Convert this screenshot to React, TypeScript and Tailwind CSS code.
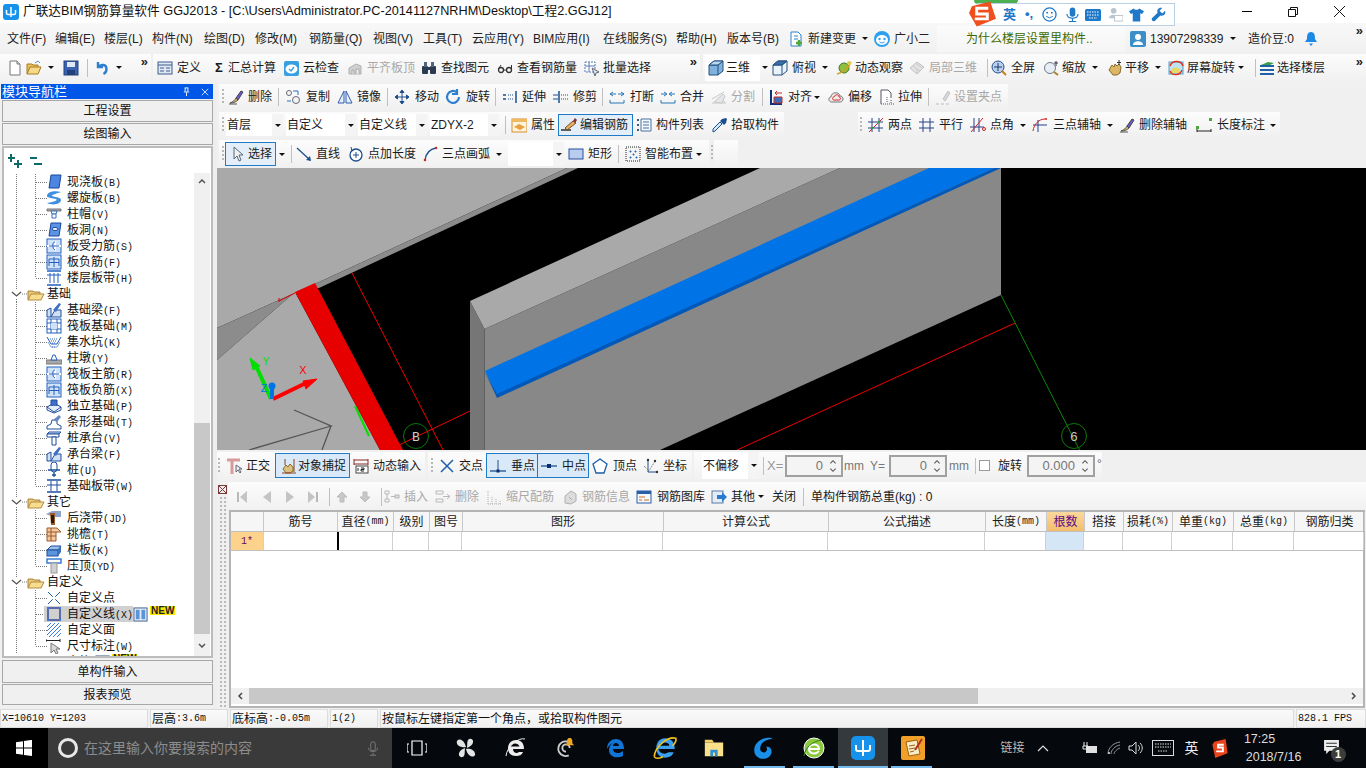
import React, { ReactNode } from 'react';

const mono = "font-['Liberation_Mono','Noto_Sans_CJK_SC',monospace] text-[10px]";

// latin bits in the old tree/status font are half as wide as the CJK ones
const Mixed = ({ t }: { t: string }) => (
    <>
        {t.split(/([\x20-\x7e]+)/).map((s, i) =>
            /[\x20-\x7e]/.test(s) ? <span key={i} className={mono}>{s}</span> : <span key={i}>{s}</span>
        )}
    </>
);

const B = '#2f5fb0';
const icons: Record<string, ReactNode> = {
    newdoc: <><path d="M3 1h7l3 3v11H3z" fill="#fff" stroke="#777" /><path d="M10 1v3h3" fill="#ddd" stroke="#777" /></>,
    open: <><path d="M1 14V4h5l1 1h5v2" fill="#e8c060" stroke="#a87c20" /><path d="M1 14l3-7h11l-3 7z" fill="#f6d98a" stroke="#a87c20" /><path d="M9 3l3-2 2 2" stroke="#5a8fd0" fill="none" /></>,
    save: <><rect x="1" y="1" width="14" height="14" fill="#3a62b0" stroke="#24407a" /><rect x="4" y="2" width="8" height="5" fill="#dfe8f6" /><rect x="4" y="10" width="8" height="5" fill="#24407a" /></>,
    undo: <path d="M4 2v5h5M4.500 7c2-3 8-3 8 2 0 2-1 4-3 5" fill="none" stroke="#2f7fd0" strokeWidth="2.400" />,
    def: <><rect x="1" y="2" width="14" height="12" fill="#dfe7f2" stroke="#3f5f8f" /><path d="M1 5h14M3 8h4M3 11h4M9 8h4M9 11h4" stroke="#3f5f8f" /></>,
    cloud: <><rect x="1" y="1" width="15" height="15" rx="2" fill="#38a0e0" /><ellipse cx="8.500" cy="9" rx="6" ry="4.500" fill="#fff" /><path d="M6 9l2 2 3-4" stroke="#38a0e0" strokeWidth="1.400" fill="none" /></>,
    flush: <><path d="M2 14V8l7-4 5 2v8z" fill="#d0d0d0" stroke="#b0b0b0" /><path d="M5 14v-4h2v4M9 14V9h3v5" fill="#eee" stroke="#aaa" /></>,
    binoc: <><rect x="1" y="6" width="6" height="8" rx="1" fill="#2c3a50" /><rect x="9" y="6" width="6" height="8" rx="1" fill="#2c3a50" /><rect x="3" y="2" width="3" height="5" fill="#50647f" /><rect x="10" y="2" width="3" height="5" fill="#50647f" /><rect x="6" y="7" width="4" height="3" fill="#2c3a50" /></>,
    glasses: <><circle cx="4" cy="10" r="2.500" fill="none" stroke="#333" strokeWidth="1.300" /><circle cx="12" cy="10" r="2.500" fill="none" stroke="#333" strokeWidth="1.300" /><path d="M1.500 9L4 5M14.500 9V5M6.500 10h3" stroke="#333" fill="none" /></>,
    batch: <><rect x="1" y="2" width="10" height="10" fill="#fff" stroke="#5a7ab0" strokeDasharray="2 1" /><path d="M1 6h10M5 2v10" stroke="#5a7ab0" /><path d="M8 8l7 4-3 1-1 3z" fill="#dbe6f5" stroke="#667" /></>,
    cube: <><path d="M1 5l5-4h9v10l-5 4H1z" fill="#7fb2dc" stroke="#24507f" /><path d="M1 5h9v10M10 5l5-4" fill="none" stroke="#24507f" /><path d="M1 5h9l5-4H6z" fill="#b8d6ee" stroke="#24507f" /></>,
    cubeTop: <><path d="M1 5l5-4h9v10l-5 4H1z" fill="#eaf2fa" stroke="#24507f" /><path d="M1 5h9v10M10 5l5-4" fill="none" stroke="#24507f" /><path d="M1 5h9l5-4H6z" fill="#3a6ea5" stroke="#24507f" /></>,
    orbit: <><circle cx="8" cy="8" r="5" fill="#8fbf3f" stroke="#3f7a20" /><path d="M1 14C6 13 13 8 15 2" stroke="#d0a020" strokeWidth="1.500" fill="none" /><circle cx="13" cy="3" r="2" fill="#e0d050" /></>,
    part3d: <><path d="M1 8l7-6 7 5-7 7z" fill="#e4e4e4" stroke="#c0c0c0" /><path d="M4 6l7 5M7 3.500l7 5M8 14V9" stroke="#c8c8c8" /></>,
    full: <><circle cx="7" cy="7" r="6" fill="#b8d0ee" stroke="#28508a" /><path d="M7 3v8M3 7h8" stroke="#1c3c70" /><path d="M11 11l4 4" stroke="#c08020" strokeWidth="2" /></>,
    zoom: <><circle cx="7" cy="8" r="5.500" fill="#e8eef6" stroke="#707a88" /><path d="M11 12l4 3" stroke="#b08030" strokeWidth="2" /><path d="M13 1v5M11 3h4" stroke="#334" /></>,
    hand: <><path d="M2 10l3-5 2 2 1-3 2 2 2-2 2 3-1 6-3 2H6z" fill="#dcb664" stroke="#8a6a2a" /><path d="M12 0v5M10 2.500h4" stroke="#334" /></>,
    screen: <><rect x="1" y="2" width="14" height="12" fill="#bfe3f2" stroke="#4fa0c8" /><path d="M3 10c2-3 6-3 9-1v4H3z" fill="#e8d86a" /><path d="M2 6c2-6 11-6 13 0M14 10c-2 6-10 6-12 1" fill="none" stroke="#e03020" strokeWidth="1.400" /></>,
    layers: <><path d="M2 5l7-3 6 1-6 3z" fill="#3a9c48" /><path d="M1 6h14M1 10h14M1 14h14" stroke="#1f5fa8" strokeWidth="1.800" /></>,
    bluedoc: <><path d="M3 1h7l3 3v11H3z" fill="#fff" stroke="#2a80d0" /><path d="M6 5h4M6 8h4" stroke="#2a80d0" /><path d="M11 9v6M8 12h6" stroke="#4ca83a" strokeWidth="2.400" /></>,
    avatar: <><circle cx="8" cy="8" r="8" fill="#2ea0f0" /><ellipse cx="8" cy="9" rx="6" ry="5" fill="#fff" /><circle cx="5.500" cy="8" r="1.200" fill="#2ea0f0" /><circle cx="10.500" cy="8" r="1.200" fill="#2ea0f0" /><path d="M5.500 11q2.500 2 5 0" stroke="#2ea0f0" fill="none" /></>,
    user: <><rect width="16" height="16" rx="2" fill="#3a8fc8" /><circle cx="8" cy="6" r="3" fill="#fff" /><path d="M3 14c0-5 10-5 10 0z" fill="#fff" /></>,
    bell: <><path d="M8 1c-4 0-4 4-4 7l-2 3h12l-2-3c0-3 0-7-4-7z" fill="#1e88e5" /><path d="M6 12.500h4L8 15z" fill="#1e88e5" /></>,
    erase: <><path d="M2 14c3-1 5-3 6-5l2 2c-2 2-4 3-8 3z" fill="#d8b060" stroke="#555" /><path d="M8 9l5-7 2 1-5 8z" fill="#6a5acd" stroke="#444" /><path d="M1 15h8" stroke="#555" /></>,
    copy: <><circle cx="4" cy="4" r="2.500" fill="none" stroke="#667" /><circle cx="11" cy="11" r="3.500" fill="none" stroke="#667" /><path d="M8 2h5v4M6 12H2" stroke="#2a6cc0" fill="none" /></>,
    mirror: <><path d="M7 2L1 14h6z" fill="#e6eef8" stroke={B} /><path d="M9 2l6 12H9z" fill="#e6eef8" stroke={B} /></>,
    move: <path d="M8 1v14M1 8h14M8 1L6 3.500h4zM8 15l-2-2.500h4zM1 8l2.500-2v4zM15 8l-2.500-2v4z" fill="#1d4f8e" stroke="#1d4f8e" />,
    rotate: <path d="M12 3.500A6 6 0 1 0 14 8M12 0v5H7" fill="none" stroke="#2f7fd0" strokeWidth="2.200" />,
    extend: <><path d="M14 2v12M1 6h3M1 10h3" stroke="#1d4f8e" strokeWidth="1.500" fill="none" /><path d="M6 6h6M6 10h6" stroke="#1d4f8e" strokeDasharray="1 1" /></>,
    trim: <><path d="M6 2v12" stroke="#1d4f8e" strokeWidth="1.500" /><path d="M0 6h5M0 10h5" stroke="#1d4f8e" /><path d="M8 6h7M8 10h7" stroke="#1d4f8e" strokeDasharray="1 1" /></>,
    brk: <path d="M1 11v3h14v-3M1 5h6M9 5h6M4 3L1 5l3 2M12 3l3 2-3 2" fill="none" stroke="#2a76b8" />,
    merge: <path d="M1 11v3h14v-3M1 5h5M10 5h5M4 3l3 2-3 2M12 3L9 5l3 2" fill="none" stroke="#2a76b8" />,
    split: <><path d="M1 14h14M1 10l12-7M10 8l4 6" stroke="#c8c8c8" fill="none" /><path d="M3 13l9-8 2 2-3 7z" fill="#e6e6e6" stroke="#c8c8c8" /></>,
    align: <><path d="M1 1v14h11" fill="none" stroke="#0d2f80" strokeWidth="2" /><path d="M4 8h8v6H4z" fill="#3a6fc0" stroke="#c03020" /><path d="M5 4h7M5 4l2-2M5 4l2 2" stroke="#c03020" fill="none" /></>,
    offset: <><path d="M4 13c-4 0-4-5-1-5 0-5 8-6 9-1 4 0 4 6 0 6z" fill="#f2e8e4" stroke="#707a88" /><path d="M6 11c-2 0-2-3 0-3 1-3 5-3 5 0 2 0 2 3 0 3z" fill="none" stroke="#d03030" /></>,
    stretch: <><path d="M2 15V1h7l3 3v5" fill="#fff" stroke="#556" /><path d="M2 15h13M8 8v6M12 11v3" stroke="#556" strokeDasharray="1 1" fill="none" /></>,
    grip: <><path d="M8 10l5-8 2 2-5 8z" fill="#d8d8d8" stroke="#c0c0c0" /><path d="M1 15h3M6 15h3M11 15h3" stroke="#bbb" /></>,
    props: <><rect x="1" y="2" width="15" height="13" fill="#fdf2dc" stroke="#d89030" /><path d="M1 2h15v3H1z" fill="#f0b860" /><path d="M3 10l5-3 6 3-5 3z" fill="#e8a040" /></>,
    editbar: <><path d="M0 13h10" stroke="#222" strokeWidth="1.400" /><path d="M4 11l8-7 3 2-9 7z" fill="#e8b060" stroke="#7a4a20" /><path d="M12 4l2-3 2 2-2 3z" fill="#8a3030" /></>,
    list: <><path d="M5 2h10v12H5z" fill="#f4f8fc" stroke="#4a70a0" /><path d="M7 5h6M7 8h6M7 11h6" stroke="#4a70a0" /><path d="M1 3h2M1 8h2M1 13h2" stroke="#3a5a80" strokeWidth="2" /></>,
    pick: <><path d="M1 15l2-1 7-7-2-2-7 7z" fill="#d8e8f8" stroke="#1d4f8e" /><path d="M8 4l4 4 2-2 1-4-1-1-4 1z" fill="#1d4f8e" /></>,
    twopt: <><path d="M4 1v14M11 1v14M0 5h15M0 11h15" stroke="#27408a" /><path d="M1 15L15 1" stroke="#d02020" /><circle cx="4" cy="11" r="1.200" fill="#3a9a3a" /><circle cx="11" cy="5" r="1.200" fill="#3a9a3a" /></>,
    para: <path d="M4 1v14M11 1v14M0 5h15M0 11h15" stroke="#27408a" />,
    angle: <><path d="M4 1v14M9 1v14M0 10h14" stroke="#27408a" /><path d="M1 15L13 1" stroke="#d02020" /><circle cx="14" cy="12" r="1.500" fill="none" stroke="#d02020" /></>,
    arcaux: <><path d="M1 8h14M6 3v12" stroke="#27408a" /><path d="M1 14C2 7 7 2 13 2" fill="none" stroke="#d02020" /><circle cx="14" cy="2" r="1" fill="#d02020" /></>,
    dim: <><path d="M1 12v3M15 12v3M1 14h14" stroke="#222" /><rect x="0" y="9" width="3" height="3" fill="#4ca83a" /><rect x="13" y="1" width="3" height="3" fill="#4ca83a" /></>,
    cursor: <path d="M4 1v12l3-3 2 5 2-1-2-5h4z" fill="#f0f0f0" stroke="#5a6878" />,
    line: <><path d="M1 2l13 12" stroke="#1d4f8e" strokeWidth="1.300" /><path d="M15 15l-5-1 4-4z" fill="#1d4f8e" /></>,
    ptadd: <><circle cx="8" cy="9" r="6" fill="#fff" stroke="#1d4f8e" strokeWidth="1.300" /><path d="M8 6v6M5 9h6" stroke="#1d4f8e" /><path d="M3 1l1 4 3-2" fill="none" stroke="#1d4f8e" /></>,
    arc: <><path d="M2 14C3 7 7 3 13 2" fill="none" stroke="#1d4f8e" strokeWidth="1.300" /><circle cx="2" cy="14" r="1.300" fill="#c03020" /><circle cx="13" cy="2" r="1.300" fill="#c03020" /></>,
    rect: <rect x="1" y="3" width="14" height="10" fill="#b8ccf0" stroke="#2a4fa0" />,
    smart: <><rect x="1" y="1" width="14" height="14" fill="#f4f4f4" stroke="#222" strokeDasharray="1 1" /><path d="M5 5h1v1H5zM10 5h1v1h-1zM8 8h1v1H8zM5 11h1v1H5zM11 11h1v1h-1z" stroke="#2a6cc0" /></>,
    ortho: <><path d="M0 2h13M5 2v14" stroke="#d89a9a" strokeWidth="3" /><path d="M9 7v7l2-2 2 3 1-1-2-3h3z" fill="#e8eef4" stroke="#667" /></>,
    snap: <><path d="M2 11l3-4 2 2 2-3 3 3v4l-3 2H5z" fill="#dcc080" stroke="#8a6a2a" /><path d="M4 1v6M13 1v13M1 15h14" stroke="#8a4020" /></>,
    dyn: <><path d="M1 2h14M1 6h14" stroke="#8a2a2a" /><path d="M1 1v6M15 1v6" stroke="#8a2a2a" /><rect x="3" y="8" width="12" height="7" fill="#fff" stroke="#444" /><path d="M5 10v3M8 10h3v1.500H8V13h3" stroke="#222" fill="none" /></>,
    cross: <path d="M2 2l12 12M14 2L2 14" stroke="#1d5fa8" strokeWidth="1.500" />,
    perp: <><path d="M0 13h16" stroke="#1d4f8e" strokeWidth="1.300" /><path d="M8 2v11" stroke="#1d4f8e" /><rect x="6.500" y="11.500" width="3" height="3" fill="#0c2c70" /></>,
    mid: <><path d="M0 8h16" stroke="#1d4f8e" strokeWidth="1.300" /><rect x="6" y="6" width="4" height="4" fill="#0c2c70" /></>,
    vertex: <path d="M8 1l7 5-3 9H4L1 6z" fill="#fff" stroke="#1d5fa8" strokeWidth="1.300" />,
    coord: <><path d="M5 2v12h10" stroke="#1d4f8e" fill="none" /><path d="M1 8l5 5 6-10" stroke="#666" strokeDasharray="1 1" fill="none" /><circle cx="5" cy="2" r="1.200" fill="#333" /><circle cx="14" cy="14" r="1.200" fill="#333" /><circle cx="12" cy="3" r="1.200" fill="#333" /></>,
    first: <><rect x="3" y="3" width="2" height="10" fill="#b8b8b8" /><path d="M13 2L6 8l7 6z" fill="#c4c4c4" /></>,
    prev: <path d="M12 2L4 8l8 6z" fill="#c4c4c4" />,
    next: <path d="M4 2l8 6-8 6z" fill="#c4c4c4" />,
    last: <><rect x="11" y="3" width="2" height="10" fill="#b8b8b8" /><path d="M3 2l7 6-7 6z" fill="#c4c4c4" /></>,
    up: <path d="M8 3l5 5h-3v5H6V8H3z" fill="#c8c8c8" stroke="#bbb" />,
    down: <path d="M8 13l5-5h-3V3H6v5H3z" fill="#c8c8c8" stroke="#bbb" />,
    ins: <><path d="M1 2h4v3H1zM1 10h4v3H1z" fill="none" stroke="#b8b8b8" /><path d="M3 5v5M7 7.500h8" stroke="#b8b8b8" /><rect x="11" y="6" width="4" height="3" fill="#ddd" stroke="#b8b8b8" /></>,
    del: <><path d="M1 2h7v3H1zM1 10h7v3H1z" fill="none" stroke="#b8b8b8" /><path d="M8 7.500h7M12 5l3 2.500-3 2.500" fill="none" stroke="#b8b8b8" /></>,
    scale: <path d="M2 15V1M6 15V7M10 15V9M14 15v-3M2 15h13" stroke="#b0b0b0" strokeDasharray="1 1" />,
    info: <><path d="M3 14V7l6-5 5 3v7l-5 3z" fill="#dcdcdc" stroke="#b0b0b0" /><path d="M7 8l3 3" stroke="#aaa" /></>,
    lib: <><rect x="1" y="2" width="14" height="12" fill="#f4f8fc" stroke="#2a5fa8" /><path d="M1 2h14v3H1z" fill="#2a5fa8" /><path d="M3 8h6M3 11h3M8 11h5" stroke="#d07020" /></>,
    other: <><rect x="1" y="2" width="11" height="12" fill="#e4ecf6" stroke="#5a7aa8" /><path d="M6 6h5V3l5 5-5 5v-3H6z" fill="#2a7ad0" /></>,
    // tree
    slab: <path d="M3 14L5 1h10l-2 13z" fill="#4d86e0" stroke="#16479c" />,
    spiral: <path d="M15 2C8 0 1 2 1 6c0 2 6 2 9 3 2 1-1 3-9 4 6 3 14 1 14-3 0-3-7-3-9-4-1-1 3-2 9-4z" fill="#3f8fe0" />,
    cap: <><path d="M1 3h14v2H1z" fill="#aaa" stroke="#777" /><path d="M5 5h6l-1 3H6z" fill="#fff" stroke="#3a6ec0" /><path d="M6 8h4v4H6z" fill="#fff" stroke="#3a6ec0" /></>,
    hole: <><path d="M3 14L5 1h10l-2 13z" fill="#5d93e4" stroke="#16479c" /><ellipse cx="9" cy="7" rx="3" ry="1.500" fill="#fff" stroke="#16479c" /></>,
    g1: <><rect x="1" y="1" width="14" height="14" fill="#d0e2f8" stroke="#2260c0" /><path d="M1 8h14M9 3v10" stroke="#fff" strokeWidth="2" /><path d="M3 8h10" stroke="#2260c0" /><path d="M9 4C6 4 6 11 9 12" stroke="#2260c0" fill="none" /></>,
    g2: <><rect x="1" y="1" width="14" height="14" fill="#d0e2f8" stroke="#2260c0" /><path d="M3 5h10v7M3 5v7M3 8.500h10M8 3v10" stroke="#2260c0" fill="none" /></>,
    g3: <><path d="M1 1h14M1 15h14" stroke="#2260c0" strokeWidth="1.500" /><path d="M4 3v10M8 3v10M12 3v10M1 5h14" stroke="#2260c0" /></>,
    fbeam: <><path d="M1 15V8l4-2v9zM5 15h10V8H9z" fill="#cfe0f5" stroke="#1f4f9e" /><path d="M7 8l6-7 2 1-5 8z" fill="#3f70c8" /></>,
    raft: <><rect x="1" y="1" width="14" height="14" fill="#fff" stroke="#2260c0" /><path d="M5 1v14M11 1v14M1 5h14M1 11h14" stroke="#2260c0" /><rect x="5" y="5" width="6" height="6" fill="#d0e2f8" /></>,
    pit: <><path d="M1 3l4 7h6l4-7" fill="none" stroke="#2260c0" /><path d="M4 5h8M5 7h6M6 9h4M6 13h4" stroke="#2260c0" strokeDasharray="1 1" /><path d="M2 8l3 5h6l3-5" fill="none" stroke="#7aa0d8" /></>,
    pier: <><rect x="0" y="10" width="16" height="4" fill="#a8a8a8" stroke="#777" /><path d="M5 10l2-5h2l2 5z" fill="#fff" stroke="#2260c0" /></>,
    iso: <><path d="M1 9l7-4 7 4-7 5z" fill="#e4eefa" stroke="#1f4f9e" /><path d="M5 8V2h6v6" fill="#3f70c8" stroke="#1f4f9e" /><path d="M1 9v3l7 3 7-3V9" fill="none" stroke="#1f4f9e" /></>,
    strip: <><path d="M1 15v-3l4-2 1-4h5v4l4 2v3z" fill="#fff" stroke="#1f4f9e" /><path d="M7 6l6-5 2 2-4 5z" fill="#6b8bc0" /></>,
    pilecap: <><path d="M1 4l2-2h12l-2 2z" fill="#dde8f6" stroke="#1f4f9e" /><path d="M1 4h12v3H1z" fill="#fff" stroke="#1f4f9e" /><path d="M6 7h4v8H6z" fill="#fff" stroke="#1f4f9e" /></>,
    pile: <><rect x="5" y="0" width="6" height="10" rx="3" fill="#fff" stroke="#1f4f9e" /><path d="M2 8h12M8 10v5M6 13h4" stroke="#1f4f9e" strokeWidth="1.300" /></>,
    band: <><path d="M1 2h14M1 14h14" stroke="#1f4f9e" strokeWidth="1.500" /><path d="M5 3v10M11 3v10M1 7h14" stroke="#1f4f9e" /></>,
    post: <><path d="M0 4l6-3h9v6H7z" fill="#8fa4c8" /><path d="M4 3h5v12H5z" fill="#9a5a2a" /><path d="M5 5h3v8H5z" fill="#2a1a10" /></>,
    eave: <><path d="M1 2h10l4 4h-5v9H1z" fill="#f4c8a0" stroke="#9c5a2a" /><path d="M1 6h9M1 10h9M5 2v13" stroke="#9c5a2a" /></>,
    rail: <><path d="M1 8l4-4h10l-3 4z" fill="#9cc0ea" stroke="#1f4f9e" /><rect x="1" y="8" width="11" height="6" fill="#5a94dc" stroke="#1f4f9e" /><path d="M12 8l3-4v6l-3 4z" fill="#3a70b8" /></>,
    coping: <><rect x="1" y="1" width="14" height="4" fill="#fff" stroke="#2a74d0" strokeWidth="1.400" /><rect x="5" y="5" width="6" height="10" fill="#d0d0d0" stroke="#999" /></>,
    pt: <><path d="M2 2l12 12M14 2L2 14" stroke="#1d5fa8" /><rect x="6.500" y="6.500" width="3" height="3" fill="#fff" /></>,
    cline: <><rect x="2" y="2" width="12" height="12" fill="none" stroke="#0c2c90" strokeWidth="1.200" /><path d="M1 1h2v2H1zM13 1h2v2h-2zM1 13h2v2H1zM13 13h2v2h-2z" fill="#3a7ae0" /></>,
    face: <path d="M1 5l4-4M1 9l8-8M1 13L13 1M3 15L15 3M7 15l8-8M11 15l4-4" stroke="#3a7ae0" />,
    dimw: <><path d="M0 1v3M14 1v3M0 2.500h14" stroke="#222" /><path d="M5 5v10l3-3 2 4 2-1-2-4h4z" fill="#d8d8d8" stroke="#777" /></>,
    col: <><rect x="1" y="1" width="14" height="14" fill="#e4ecf6" stroke="#3a5a8a" /><rect x="3" y="3" width="4" height="10" fill="#5a94dc" /><rect x="9" y="3" width="4" height="10" fill="#5a94dc" /></>,
};

const Ico = ({ n, c = 'w-4 h-4' }: { n: string; c?: string }) => (
    <svg viewBox="0 0 16 16" className={'shrink-0 ' + c}>{icons[n]}</svg>
);

const Caret = ({ c = '' }: { c?: string }) => (
    <span className={'shrink-0 w-0 h-0 border-x-[3px] border-x-transparent border-t-[3px] border-t-[#111] ' + c} />
);

// one toolbar button: icon + label, width fixed so the row keeps its places
const T = ({ i, t, c = '', g, gap = 'ml-[4px]', caret, caretC = 'ml-[6px]' }: {
    i?: string; t?: string; c?: string; g?: boolean; gap?: string; caret?: boolean; caretC?: string;
}) => (
    <div className={'flex items-center h-full shrink-0 whitespace-nowrap ' + c + (g ? ' text-[#a8a8a8]' : '')}>
        {i && <Ico n={i} />}
        {t && <span className={gap}>{t}</span>}
        {caret && <Caret c={caretC} />}
    </div>
);

const Sep = ({ c }: { c: string }) => (
    <div className={'flex justify-center items-center h-full shrink-0 ' + c}>
        <div className="w-px h-[18px] bg-[#c0c0c0]" />
    </div>
);

const Grip = ({ c = '' }: { c?: string }) => (
    <div className={'shrink-0 h-[16px] w-[2px] bg-[repeating-linear-gradient(#b8b8b8_0_2px,transparent_2px_4px)] ' + c} />
);

const Sel = ({ t, c }: { t?: string; c: string }) => (
    <div className={'flex items-center justify-between h-full shrink-0 bg-white pl-[1px] ' + c}>
        <span>{t}</span>
        <span className="flex items-center justify-center w-[11px] h-full bg-[#f4f4f4]"><Caret /></span>
    </div>
);

const More = () => (
    <span className="ml-auto mr-[3px] self-start text-[13px] leading-[16px] font-bold text-[#222]">»</span>
);

const band = 'flex items-center shrink-0 bg-gradient-to-b from-[#fcfcfc] to-[#f1f1f1]';

const TitleBar = () => (
    <div className="flex items-center h-[23px] bg-white shrink-0 pl-[3px]">
        <svg viewBox="0 0 16 16" className="w-[16px] h-[16px] shrink-0">
            <rect width="16" height="16" rx="3" fill="#1792ea" />
            <path d="M8 3v10M3.500 6v3c0 1 .8 1.500 1.500 1.500h6c.8 0 1.500-.5 1.500-1.500V6" stroke="#fff" strokeWidth="1.500" fill="none" />
        </svg>
        <span className="ml-[4px] text-[12.700px] text-[#111] whitespace-nowrap">广联达BIM钢筋算量软件 GGJ2013 - [C:\Users\Administrator.PC-20141127NRHM\Desktop\工程2.GGJ12]</span>
        <div className="ml-auto flex items-center h-full">
            <div className="w-[46px] flex justify-center"><div className="w-[10px] h-px bg-black" /></div>
            <div className="w-[46px] flex justify-center"><svg viewBox="0 0 10 10" className="w-[10px] h-[10px]"><path d="M.5 2.500h7v7h-7zM2.500 2.500v-2h7v7h-2" fill="none" stroke="#111" /></svg></div>
            <div className="w-[50px] flex justify-center pr-[3px]"><svg viewBox="0 0 11 11" className="w-[11px] h-[11px]"><path d="M0 0l11 11M11 0L0 11" stroke="#111" /></svg></div>
        </div>
    </div>
);

const MenuBar = () => {
    const items: [string, string][] = [
        ['文件(F)', 'w-[48px]'], ['编辑(E)', 'w-[49px]'], ['楼层(L)', 'w-[48px]'], ['构件(N)', 'w-[52px]'],
        ['绘图(D)', 'w-[51px]'], ['修改(M)', 'w-[54px]'], ['钢筋量(Q)', 'w-[64px]'], ['视图(V)', 'w-[50px]'],
        ['工具(T)', 'w-[49px]'], ['云应用(Y)', 'w-[61px]'], ['BIM应用(I)', 'w-[70px]'], ['在线服务(S)', 'w-[73px]'],
        ['帮助(H)', 'w-[51px]'], ['版本号(B)', 'w-[61px]'],
    ];
    return (
        <div className="flex items-center h-[31px] shrink-0 pl-[7px] bg-gradient-to-b from-[#f8f8f8] to-[#f0f0f0] text-[#222]">
            {items.map(([t, w]) => <span key={t} className={'shrink-0 whitespace-nowrap ' + w}>{t}</span>)}
            <T i="bluedoc" t="新建变更" c="w-[86px]" caret caretC="ml-[6px]" />
            <T i="avatar" t="广小二" c="w-[63px]" />
            <div className="flex items-center w-[188px] h-[26px] bg-gradient-to-b from-[#fbfbfb] to-[#f5f5f5] pl-[29px] text-[#3c6a00] shrink-0">为什么楼层设置里构件..</div>
            <T i="user" t="13907298339" c="w-[118px] ml-[5px]" caret caretC="ml-[7px]" />
            <span className="shrink-0">造价豆:0</span>
            <Ico n="bell" c="w-4 h-4 ml-[9px]" />
            <More />
        </div>
    );
};

const MainBar = () => (
    <div className="flex h-[27px] shrink-0 mb-[3px]">
        <div className={band + ' w-[151px] pl-[7px]'}>
            <Ico n="newdoc" />
            <T i="open" c="w-[37px] ml-[3px]" caret caretC="ml-[6px]" />
            <Ico n="save" c="w-4 h-4" />
            <Sep c="w-[12px] ml-[2px]" />
            <T i="undo" c="w-[30px] ml-[1px]" caret caretC="ml-[6px]" />
            <More />
        </div>
        <div className={band + ' w-[547px] ml-[2px] pl-[4px]'}>
            <T i="def" t="定义" c="w-[54px]" />
            <div className="flex items-center w-[72px] shrink-0"><span className="w-[16px] text-center font-bold text-[13px]">Σ</span><span className="ml-[1px]">汇总计算</span></div>
            <T i="cloud" t="云检查" c="w-[64px]" />
            <T i="flush" t="平齐板顶" g c="w-[74px]" />
            <T i="binoc" t="查找图元" c="w-[76px]" />
            <T i="glasses" t="查看钢筋量" c="w-[87px]" />
            <T i="batch" t="批量选择" gap="ml-[3px]" c="w-[100px]" />
            <More />
        </div>
        <div className={band + ' flex-1 ml-[3px] pl-[2px]'}>
            <div className="flex items-center h-[26px] w-[55px] bg-white pl-[3px] shrink-0">
                <Ico n="cube" /><span className="ml-[2px]">三维</span>
            </div>
            <Caret c="ml-[2px]" />
            <T i="cubeTop" t="俯视" c="w-[64px] ml-[4px]" caret caretC="ml-[6px]" />
            <T i="orbit" t="动态观察" gap="ml-[3px]" c="w-[73px]" />
            <T i="part3d" t="局部三维" g c="w-[74px]" />
            <Sep c="w-[8px]" />
            <T i="full" t="全屏" c="w-[52px]" />
            <T i="zoom" t="缩放" gap="ml-[3px]" c="w-[64px]" caret caretC="ml-[6px]" />
            <T i="hand" t="平移" gap="ml-[2px]" c="w-[61px]" caret caretC="ml-[6px]" />
            <T i="screen" t="屏幕旋转" gap="ml-[3px]" c="w-[83px]" caret caretC="ml-[3px]" />
            <Sep c="w-[8px]" />
            <T i="layers" t="选择楼层" gap="ml-[2px]" />
            <More />
        </div>
    </div>
);

const tree: [string, string, string?][] = [
    ['slab', '现浇板(B)'], ['spiral', '螺旋板(B)'], ['cap', '柱帽(V)'], ['hole', '板洞(N)'],
    ['g1', '板受力筋(S)'], ['g2', '板负筋(F)'], ['g3', '楼层板带(H)', 'last'],
    ['', '基础'],
    ['fbeam', '基础梁(F)'], ['raft', '筏板基础(M)'], ['pit', '集水坑(K)'], ['pier', '柱墩(Y)'],
    ['g1', '筏板主筋(R)'], ['g2', '筏板负筋(X)'], ['iso', '独立基础(P)'], ['strip', '条形基础(T)'],
    ['pilecap', '桩承台(V)'], ['fbeam', '承台梁(F)'], ['pile', '桩(U)'], ['band', '基础板带(W)', 'last'],
    ['', '其它'],
    ['post', '后浇带(JD)'], ['eave', '挑檐(T)'], ['rail', '栏板(K)'], ['coping', '压顶(YD)', 'last'],
    ['', '自定义'],
    ['pt', '自定义点'], ['cline', '自定义线(X)', 'sel'], ['face', '自定义面'], ['dimw', '尺寸标注(W)', 'last'],
];

const Folder = () => (
    <>
        <path d="M24 14V5h5l1 1h6v2" fill="#e8c878" stroke="#a8863a" />
        <path d="M24 14l3-6h13l-3 6z" fill="#f8dc90" stroke="#b08c40" />
    </>
);

const NewTag = () => (
    <span className="ml-[2px] -mt-[7px] bg-[#ffe600] text-[10px] leading-[9px] px-[1px] text-[#222] font-bold shrink-0">NEW</span>
);

const TreeRow = ({ row }: { row: [string, string, string?] }) => {
    const [ic, label, kind] = row;
    if (!ic) {
        return (
            <div className="flex items-center h-[16px]">
                <svg viewBox="0 0 42 16" className="w-[42px] h-[16px] shrink-0">
                    <path d="M12.500 0v4M12.500 13v3M18 8h5" stroke="#777" strokeDasharray="1 1" />
                    <path d="M8 6l4.500 4L17 6" stroke="#555" strokeWidth="1.300" fill="none" />
                    <Folder />
                </svg>
                <span className="ml-[1px]">{label}</span>
            </div>
        );
    }
    return (
        <div className="flex items-center h-[16px]">
            <svg viewBox="0 0 43 16" className="w-[43px] h-[16px] shrink-0">
                <path d="M12.500 0v16" stroke="#777" strokeDasharray="1 1" />
                <path d={(kind === 'last' ? 'M31.500 0v8' : 'M31.500 0v16') + 'M32 8.500h11'} stroke="#777" strokeDasharray="1 1" />
            </svg>
            <div className={'flex items-center h-[16px] ' + (kind === 'sel' ? 'bg-[#d0d0d0] w-[89px] -ml-[3px] pl-[3px] shrink-0' : '')}>
                <Ico n={ic} c="w-4 h-4 -ml-[1px]" />
                <span className="ml-[5px] whitespace-nowrap"><Mixed t={label} /></span>
            </div>
            {kind === 'sel' && (
                <>
                    <Ico n="col" c="w-[15px] h-[15px]" />
                    <NewTag />
                </>
            )}
        </div>
    );
};

const NavBtn = ({ t, c = '' }: { t: string; c?: string }) => (
    <div className={'flex items-center justify-center border border-[#a8a8a8] bg-[#f0f0f0] shrink-0 text-[#111] ' + c}>{t}</div>
);

const LeftPanel = () => (
    <div className="flex flex-col w-[213px] shrink-0 pl-[1px]">
        <div className="flex items-center h-[15px] bg-[#0056e6] text-white text-[13px] shrink-0">
            <span className="ml-[1px]">模块导航栏</span>
            <svg viewBox="0 0 10 10" className="ml-auto w-[9px] h-[9px]"><path d="M3 1h4M3.500 1v4M6.500 1v4M2 5.500h6M5 6v4" stroke="#fff" fill="none" /></svg>
            <svg viewBox="0 0 10 10" className="ml-[10px] mr-[4px] w-[8px] h-[8px]"><path d="M1 1l8 8M9 1l-8 8" stroke="#fff" /></svg>
        </div>
        <NavBtn t="工程设置" c="h-[22px] ml-[1px] mt-[1px]" />
        <NavBtn t="绘图输入" c="h-[22px] ml-[1px] mt-[1px]" />
        <div className="flex-1 min-h-0 flex flex-col border-2 border-[#bcbcbc] ml-[1px] mt-[1px] bg-white overflow-hidden">
            <div className="flex items-center h-[25px] shrink-0 pl-[4px]">
                <svg viewBox="0 0 34 16" className="w-[34px] h-[16px]">
                    <path d="M3 1v8M0 5h7" stroke="#0d6a6a" strokeWidth="2" />
                    <path d="M10 7v8M6 11h8" stroke="#0d6a6a" strokeWidth="2" />
                    <path d="M22 5h7" stroke="#0d6a6a" strokeWidth="2" />
                    <path d="M26 11h8" stroke="#0d6a6a" strokeWidth="2" />
                </svg>
            </div>
            <div className="flex flex-1 min-h-0">
                <div className="flex-1 min-w-0 overflow-hidden pt-[1px] text-[#111]">
                    {tree.map(r => <TreeRow key={r[1]} row={r} />)}
                    <div className="flex items-center h-[16px]">
                        <svg viewBox="0 0 43 16" className="w-[43px] h-[16px] shrink-0"><Folder /></svg>
                        <span className="ml-[20px]">表格</span>
                        <Ico n="col" c="w-[15px] h-[15px] ml-[4px]" />
                        <NewTag />
                    </div>
                </div>
                <div className="flex flex-col w-[16px] shrink-0 bg-[#f0f0f0] mr-[1px]">
                    <div className="flex justify-center items-center h-[17px] shrink-0">
                        <svg viewBox="0 0 8 5" className="w-[8px] h-[5px]"><path d="M1 4l3-3 3 3" stroke="#555" strokeWidth="1.500" fill="none" /></svg>
                    </div>
                    <div className="h-[233px] shrink-0" />
                    <div className="h-[211px] shrink-0 bg-[#c8c8c8]" />
                    <div className="flex-1 flex justify-center items-center">
                        <svg viewBox="0 0 8 5" className="w-[8px] h-[5px]"><path d="M1 1l3 3 3-3" stroke="#555" strokeWidth="1.500" fill="none" /></svg>
                    </div>
                </div>
            </div>
        </div>
        <NavBtn t="单构件输入" c="h-[23px] ml-[1px] mt-[2px]" />
        <NavBtn t="报表预览" c="h-[21px] ml-[1px] mt-[1px] mb-[3px]" />
    </div>
);

const Scene = () => (
    <svg viewBox="0 0 1149 282" className="w-[1149px] h-[282px] block shrink-0 bg-black">
        {/* far slab and its edge */}
        <path d="M0 0H350L100 115 0 160z" fill="#a9a9a9" />
        <path d="M350 0h11L102 120 78 124 0 192V160L100 115z" fill="#8c8c8c" />
        <path d="M0 192L78 124 163 282H0z" fill="#a9a9a9" />
        <path d="M78 124l20-9 88 167h-23z" fill="#e60000" />
        <path d="M138 238l14 30" stroke="#00e000" strokeWidth="2" />
        <path d="M62 133l16-8M62 130v4" stroke="#e60000" fill="none" />
        {/* axis lines */}
        <path d="M135 105l91 177M182 277l71-34M520 282L798 155" stroke="#f00000" fill="none" />
        <path d="M784 127l79 156" stroke="#0b8a0b" fill="none" />
        {/* wall */}
        <path d="M253 133l14.500 28V282H253z" fill="#767676" />
        <path d="M267.500 161L623 0h161v127L443 282H267.500z" fill="#888" />
        <path d="M253 133L543 0h80L267.500 161z" fill="#a9a9a9" />
        <path d="M268 203L712 0h65L280 227z" fill="#0073e6" />
        <path d="M268 204l12 26L784 0h-7L280 226z" fill="#0059b8" />
        {/* axis bubbles */}
        <circle cx="199" cy="268" r="12.500" fill="none" stroke="#0b7a0b" />
        <text x="199" y="273" textAnchor="middle" fontSize="13" fill="#ccc" fontFamily="Liberation Mono">B</text>
        <circle cx="857" cy="268" r="12.500" fill="none" stroke="#0b7a0b" />
        <text x="857" y="273" textAnchor="middle" fontSize="13" fill="#ccc" fontFamily="Liberation Mono">6</text>
        {/* construction arrow */}
        <path d="M77 242l37 16-82 24M114 258l-9 24" stroke="#555" strokeWidth="1.300" fill="none" />
        {/* ucs */}
        <path d="M54 231L40 200" stroke="#00e000" strokeWidth="4" />
        <path d="M33 190l10 8-7 4z" fill="#00e000" stroke="#00e000" />
        <path d="M56 231l33-16" stroke="#ff0000" strokeWidth="4" />
        <path d="M100 211l-11 10-3-8z" fill="#ff0000" stroke="#ff0000" />
        <path d="M55 231v-14" stroke="#0073e6" strokeWidth="4" />
        <circle cx="55" cy="218" r="3.500" fill="#0073e6" />
        <text x="49" y="197" textAnchor="middle" fontSize="10" fill="#00e000" fontFamily="Liberation Sans">Y</text>
        <text x="86" y="206" textAnchor="middle" fontSize="11" fill="#ff0000" fontFamily="Liberation Sans">X</text>
        <text x="47" y="224" textAnchor="middle" fontSize="11" fill="#0073e6" fontFamily="Liberation Sans">Z</text>
    </svg>
);

const Spin = ({ v, c }: { v: string; c: string }) => (
    <div className={'flex items-center h-[22px] border-2 border-[#a0a0a0] bg-[#f4f4f4] shrink-0 ' + c}>
        <span className="flex-1 text-right text-[#777] text-[13px]">{v}</span>
        <svg viewBox="0 0 8 16" className="w-[8px] h-[14px] ml-[6px] mr-[4px]"><path d="M1 5l3-3 3 3M1 11l3 3 3-3" stroke="#555" strokeWidth="1.200" fill="none" /></svg>
    </div>
);

const SnapBar = () => (
    <div className="flex h-[30px] shrink-0 items-center pt-[1px]">
        <div className={band + ' h-[27px] w-[208px] pl-[1px]'}>
            <Grip c="mr-[7px]" />
            <T i="ortho" t="正交" gap="ml-[3px]" c="w-[48px]" />
            <div className="flex items-center h-[25px] w-[75px] border border-[#1f7ac8] bg-[#d9e9f7] pl-[5px] shrink-0"><Ico n="snap" /><span className="ml-[1px]">对象捕捉</span></div>
            <T i="dyn" t="动态输入" gap="ml-[4px]" c="ml-[3px]" />
        </div>
        <div className={band + ' h-[27px] w-[264px] ml-[3px] pl-[3px]'}>
            <Grip c="mr-[6px]" />
            <T i="cross" t="交点" gap="ml-[4px]" c="w-[47px]" />
            <div className="flex items-center h-[25px] w-[52px] border border-[#1f7ac8] bg-[#d9e9f7] pl-[3px] shrink-0"><Ico n="perp" /><span className="ml-[5px]">垂点</span></div>
            <div className="flex items-center h-[25px] w-[52px] -ml-px border border-[#1f7ac8] bg-[#d9e9f7] pl-[3px] shrink-0"><Ico n="mid" /><span className="ml-[5px]">中点</span></div>
            <T i="vertex" t="顶点" gap="ml-[5px]" c="ml-[3px] w-[51px]" />
            <T i="coord" t="坐标" gap="ml-[4px]" />
        </div>
        <div className={band + ' h-[27px] flex-none w-[408px] ml-[2px]'}>
            <Sel t="不偏移" c="w-[57px] ml-[8px] h-[25px]" />
            <Sep c="w-[8px]" />
            <span className="text-[#999] w-[18px] text-[13px] shrink-0">X=</span>
            <Spin v="0" c="w-[58px]" />
            <span className="text-[#777] ml-[1px] w-[26px] shrink-0">mm</span>
            <span className="text-[#777] w-[19px] shrink-0">Y=</span>
            <Spin v="0" c="w-[58px]" />
            <span className="text-[#777] ml-[2px] w-[26px] shrink-0">mm</span>
            <div className="w-px h-[16px] bg-[#c0c0c0] shrink-0" />
            <div className="ml-[3px] w-[11px] h-[11px] border border-[#999] bg-white shrink-0" />
            <span className="ml-[8px] shrink-0">旋转</span>
            <Spin v="0.000" c="w-[68px] ml-[5px]" />
            <span className="ml-[2px] text-[#666] -mt-[4px]">°</span>
        </div>
    </div>
);

const SubBar = () => (
    <div className={band + ' h-[28px] w-full pl-[6px] pt-[1px]'}>
        <T i="first" c="w-[26px]" />
        <T i="prev" c="w-[23px] -ml-[1px]" />
        <T i="next" c="w-[23px]" />
        <T i="last" c="w-[20px]" />
        <Sep c="w-[9px]" />
        <T i="up" c="w-[23px]" />
        <T i="down" c="w-[21px]" />
        <Sep c="w-[6px]" />
        <T i="ins" t="插入" g c="w-[51px]" />
        <T i="del" t="删除" g c="w-[51px]" />
        <T i="scale" t="缩尺配筋" g c="w-[76px]" />
        <T i="info" t="钢筋信息" g c="w-[74px]" />
        <T i="lib" t="钢筋图库" gap="ml-[5px]" c="w-[75px]" />
        <T i="other" t="其他" c="w-[61px]" caret caretC="ml-[3px]" />
        <span className="w-[24px] shrink-0">关闭</span>
        <Sep c="w-[15px]" />
        <span className="whitespace-nowrap">单构件钢筋总重(kg) : 0</span>
    </div>
);

const cols: [string, string][] = [
    ['', 'w-[33px]'], ['筋号', 'w-[74px]'], ['直径(mm)', 'w-[56px]'], ['级别', 'w-[36px]'], ['图号', 'w-[33px]'],
    ['图形', 'w-[201px]'], ['计算公式', 'w-[165px]'], ['公式描述', 'w-[157px]'], ['长度(mm)', 'w-[61px]'],
    ['根数', 'w-[38px]'], ['搭接', 'w-[39px]'], ['损耗(%)', 'w-[49px]'], ['单重(kg)', 'w-[61px]'],
    ['总重(kg)', 'w-[61px]'], ['钢筋归类', 'w-[70px]'],
];

const RebarGrid = () => (
    <div className="flex-1 min-h-0 flex flex-col border-2 border-[#b4b4b4] bg-white ml-[1px] mr-[1px]">
        <div className="flex h-[20px] shrink-0 bg-[#f6f6f6] border-b border-[#c0c0c0]">
            {cols.map(([t, w]) => (
                <div key={t} className={'flex items-center justify-center shrink-0 border-r border-[#c8c8c8] whitespace-nowrap ' + w + (t === '根数' ? ' bg-gradient-to-b from-[#fbd89c] to-[#f3bd6c] text-[#5a0a8a]' : '')}>
                    <Mixed t={t} />
                </div>
            ))}
        </div>
        <div className="flex h-[19px] shrink-0 border-b border-[#c0c0c0]">
            {cols.map(([t, w], i) => (
                <div key={t} className={'flex items-center justify-center shrink-0 border-r border-[#d0d0d0] ' + w
                    + (i === 0 ? ' bg-[#fdd28c] text-[#6a0a5a]' : '')
                    + (t === '根数' ? ' bg-[#d5e6f6]' : '')
                    + (t === '直径(mm)' ? ' border-l-2 border-l-black -ml-px' : '')}>
                    {i === 0 && <Mixed t="1*" />}
                </div>
            ))}
        </div>
        <div className="flex-1" />
        <div className="flex items-center h-[16px] shrink-0 mb-[2px] bg-[#f0f0f0]">
            <div className="flex justify-center items-center w-[18px] shrink-0">
                <svg viewBox="0 0 5 8" className="w-[5px] h-[8px]"><path d="M4 1L1 4l3 3" stroke="#444" strokeWidth="1.500" fill="none" /></svg>
            </div>
            <div className="w-[729px] h-full bg-[#c8c8c8] shrink-0" />
            <svg viewBox="0 0 5 8" className="ml-auto mr-[7px] w-[5px] h-[8px]"><path d="M1 1l3 3-3 3" stroke="#444" strokeWidth="1.500" fill="none" /></svg>
        </div>
    </div>
);

const RightPanel = () => (
    <div className="flex-1 min-w-0 flex flex-col pl-0">
        <div className={band + ' h-[24px] w-[789px] ml-[2px] pl-[3px] pt-[2px]'}>
            <Grip c="mr-[4px]" />
            <T i="erase" t="删除" c="w-[44px]" />
            <Sep c="w-[13px]" />
            <T i="copy" t="复制" gap="ml-[5px]" c="w-[52px]" />
            <T i="mirror" t="镜像" c="w-[43px]" />
            <Sep c="w-[14px]" />
            <T i="move" t="移动" gap="ml-[5px]" c="w-[51px]" />
            <T i="rotate" t="旋转" gap="ml-[5px]" c="w-[43px]" />
            <Sep c="w-[14px]" />
            <T i="extend" t="延伸" c="w-[51px]" />
            <T i="trim" t="修剪" c="w-[43px]" />
            <Sep c="w-[13px]" />
            <T i="brk" t="打断" gap="ml-[5px]" c="w-[51px]" />
            <T i="merge" t="合并" c="w-[51px]" />
            <T i="split" t="分割" g c="w-[44px]" />
            <Sep c="w-[15px]" />
            <T i="align" t="对齐" gap="ml-[2px]" c="w-[58px]" caret caretC="ml-[2px]" />
            <T i="offset" t="偏移" c="w-[51px]" />
            <T i="stretch" t="拉伸" gap="ml-[3px]" c="w-[43px]" />
            <Sep c="w-[13px]" />
            <T i="grip" t="设置夹点" g gap="ml-[3px]" />
        </div>
        <div className="flex h-[24px] mt-[4px] shrink-0">
            <div className={band + ' w-[565px] ml-[2px] pl-[3px] pt-[2px]'}>
                <Grip c="mr-[2px]" />
                <Sel t="首层" c="w-[57px]" />
                <Sel t="自定义" c="w-[70px] ml-[3px]" />
                <Sel t="自定义线" c="w-[69px] ml-[2px]" />
                <Sel t="ZDYX-2" c="w-[69px] ml-[3px]" />
                <Sep c="w-[12px]" />
                <T i="props" t="属性" c="w-[47px]" />
                <div className="flex items-center h-[22px] w-[75px] border border-[#1f7ac8] bg-[#e3eef8] pl-[2px] shrink-0"><Ico n="editbar" /><span className="ml-[3px]">编辑钢筋</span></div>
                <T i="list" t="构件列表" c="w-[76px] ml-[3px]" />
                <T i="pick" t="拾取构件" gap="ml-[3px]" />
            </div>
            <div className={band + ' w-[422px] ml-[74px] pl-[2px] pt-[2px]'}>
                <Grip c="mr-[6px]" />
                <T i="twopt" t="两点" c="w-[51px]" />
                <T i="para" t="平行" c="w-[51px]" />
                <T i="angle" t="点角" c="w-[62px]" caret caretC="ml-[6px]" />
                <T i="arcaux" t="三点辅轴" gap="ml-[5px]" c="w-[87px]" caret caretC="ml-[6px]" />
                <T i="erase" t="删除辅轴" c="w-[77px]" />
                <T i="dim" t="长度标注" gap="ml-[5px]" caret caretC="ml-[5px]" />
            </div>
        </div>
        <div className="flex h-[26px] mt-[4px] shrink-0">
            <div className={band + ' w-[490px] ml-[2px] pl-[3px] pt-[2px]'}>
                <Grip />
                <div className="flex items-center h-[24px] w-[51px] ml-[1px] border border-[#1f7ac8] bg-[#e3eef8] pl-[4px] shrink-0 whitespace-nowrap"><Ico n="cursor" /><span className="ml-[2px]">选择</span></div>
                <Caret c="ml-[3px]" />
                <Sep c="w-[11px] ml-[1px]" />
                <T i="line" t="直线" c="w-[52px] ml-[-1px]" />
                <T i="ptadd" t="点加长度" c="w-[75px]" />
                <T i="arc" t="三点画弧" gap="ml-[3px]" c="w-[85px]" caret caretC="ml-[6px]" />
                <Sel c="w-[56px] h-[24px]" />
                <T i="rect" t="矩形" c="w-[43px] ml-[4px]" />
                <Sep c="w-[14px]" />
                <T i="smart" t="智能布置" gap="ml-[4px]" caret caretC="ml-[3px]" />
            </div>
            <Grip c="ml-[2px] mt-[5px]" />
            <div className={band + ' w-[24px] ml-[1px]'} />
        </div>
        <div className="mt-[2px] shrink-0 overflow-hidden"><Scene /></div>
        <SnapBar />
        <div className="flex flex-1 min-h-0 mt-[2px]">
            <div className="flex flex-col items-center w-[11px] shrink-0">
                <svg viewBox="0 0 9 9" className="w-[9px] h-[9px] mt-[3px] shrink-0"><rect x=".5" y=".5" width="8" height="8" fill="#eee" stroke="#7a3a3a" /><path d="M1 1l7 7M8 1L1 8" stroke="#7a3a3a" /></svg>
                <div className="flex-1 w-[7px] mt-[2px] bg-[radial-gradient(#bbb_1px,transparent_1px)] bg-[length:4px_4px]" />
            </div>
            <div className="flex-1 min-w-0 flex flex-col">
                <SubBar />
                <RebarGrid />
            </div>
        </div>
    </div>
);

const StatusBar = () => {
    const cells: [string, string][] = [
        ['X=10610 Y=1203', 'w-[148px]'], ['层高:3.6m', 'w-[78px]'], ['底标高:-0.05m', 'w-[98px]'], ['1(2)', 'w-[48px]'],
        ['按鼠标左键指定第一个角点，或拾取构件图元', 'w-[914px]'], ['828.1 FPS', 'flex-1'],
    ];
    return (
        <div className="flex gap-[2px] h-[20px] shrink-0 bg-[#f0f0f0] pt-[1px]">
            {cells.map(([t, w]) => (
                <div key={t} className={'flex items-center border border-[#dcdcdc] pl-[1px] text-[#111] whitespace-nowrap bg-gradient-to-b from-[#fafafa] to-[#f0f0f0] ' + w}>
                    <Mixed t={t} />
                </div>
            ))}
        </div>
    );
};

const TS = ({ c = '', line, active, children }: { c?: string; line?: string; active?: boolean; children: ReactNode }) => (
    <div className={'relative flex items-center justify-center h-full shrink-0 w-[49.600px] ' + (active ? 'bg-[#33393d] ' : '') + c}>
        {children}
        {line && <div className={'absolute bottom-0 h-[2px] bg-[#76b9ed] ' + line} />}
    </div>
);

const Taskbar = () => (
    <div className="flex items-center h-[40px] shrink-0 bg-[#05090d] text-[#e8e8e8]">
        <div className="flex items-center justify-center w-[48px] h-full bg-black shrink-0">
            <svg viewBox="0 0 16 16" className="w-[16px] h-[16px]"><path d="M0 2.200L7 1.200V7.500H0zM8 1l8-1.200V7.500H8zM0 8.500h7v6.300L0 13.800zM8 8.500h8V16L8 15z" fill="#fff" /></svg>
        </div>
        <div className="flex items-center w-[344px] h-full bg-[#3a3a3a] shrink-0 pl-[10px]">
            <div className="w-[20px] h-[20px] rounded-full border-[3px] border-[#e8e8e8] shrink-0" />
            <span className="ml-[6px] text-[#8c8c8c] text-[14px]">在这里输入你要搜索的内容</span>
            <svg viewBox="0 0 16 20" className="ml-auto mr-[13px] w-[12px] h-[17px]"><rect x="5" y="1" width="6" height="12" rx="3" fill="none" stroke="#8c8c8c" /><path d="M2 9c0 7 12 7 12 0M8 16v3M4 19h8" fill="none" stroke="#8c8c8c" /></svg>
        </div>
        <TS><svg viewBox="0 0 20 16" className="w-[20px] h-[16px]"><path d="M5 1h10v14H5zM2 4H0v8h2M18 4h2v8h-2" fill="none" stroke="#fff" strokeWidth="1.200" /></svg></TS>
        <TS><svg viewBox="0 0 24 24" className="w-[22px] h-[22px]"><path d="M12 11C8 12 1 10 2 5c1-4 8-3 10 6zM13 12c1-4-1-10 4-10 5 1 3 8-4 10zM12 13c4-1 10 1 10 6-1 4-8 3-10-6zM11 12c-1 4 1 10-4 10-5-1-3-8 4-10z" fill="#e4e4e4" /></svg></TS>
        <TS><svg viewBox="0 0 24 24" className="w-[24px] h-[24px]"><path d="M6 13h14c0-7-4-9-8-9-5 0-8 4-8 8 0 5 3 8 8 8 3 0 6-1 7-4h-4c-2 2-6 1-6-3zM6.500 10.500c1-4 8-4 9 0z" fill="#eee" fillRule="evenodd" /><path d="M2 20C3 10 15 1 21 3" fill="none" stroke="#eee" /></svg></TS>
        <TS><svg viewBox="0 0 24 24" className="w-[22px] h-[22px]"><path d="M18 8a8 8 0 1 0-3 12M16 12a4 4 0 1 0-4 4" fill="none" stroke="#cfcfcf" strokeWidth="2" /><path d="M16 1c-3 0-3 3-3 6l-2 2h10l-2-2c0-3 0-6-3-6z" fill="#f0a820" /></svg></TS>
        <TS><svg viewBox="0 0 24 24" className="w-[24px] h-[24px]"><path d="M4 13C4 6 9 3 13 3c5 0 8 4 8 10H10c0 5 7 5 10 2v5c-6 3-14 1-14-6 0-3 2-6 4-7-3 1-5 4-6 6zm6-3h6c0-4-6-4-6 0z" fill="#1175d8" fillRule="evenodd" /></svg></TS>
        <TS><svg viewBox="0 0 24 24" className="w-[26px] h-[26px]"><path d="M6 13h15c0-7-4-10-9-10-5 0-8 4-8 9s3 9 8 9c4 0 7-2 8-5h-5c-2 2-8 2-9-3zM7 10c1-4 9-4 9 0z" fill="#3aa0f0" fillRule="evenodd" /><path d="M2 20C3 10 15 1 22 3c1 3-3 7-3 7M2 20c2 3 6 1 8 0" fill="none" stroke="#f0c020" strokeWidth="1.500" /></svg></TS>
        <TS><svg viewBox="0 0 24 24" className="w-[22px] h-[22px]"><path d="M2 6V3h8l2 3z" fill="#f4d060" /><path d="M2 6h20v15H2z" fill="#fbe08a" /><path d="M8 21v-7h8v7h-3v-4h-2v4z" fill="#2a90d8" /></svg></TS>
        <TS line="left-[5px] right-[4px]"><svg viewBox="0 0 24 24" className="w-[26px] h-[26px]"><path d="M20 3c-9-2-17 4-17 11 0 5 4 8 8 8 5 0 8-3 8-7 0-3-3-5-5-4 2 2 0 6-3 5-4-1-3-7 1-10 3-2 6-2 8-3z" fill="#1a8fe8" /></svg></TS>
        <TS line="left-[4px] right-[4px]"><svg viewBox="0 0 24 24" className="w-[24px] h-[24px]"><circle cx="12" cy="12" r="10" fill="#8cc83c" stroke="#fff" /><path d="M7 13h10c0-6-10-6-10 0 0 5 7 6 10 2" fill="none" stroke="#fff" strokeWidth="2" /><path d="M2 20C3 12 10 5 20 4" fill="none" stroke="#2a7a1a" /></svg></TS>
        <TS active line="left-0 right-0"><svg viewBox="0 0 24 24" className="w-[24px] h-[24px]"><rect width="24" height="24" rx="5" fill="#1792ea" /><path d="M12 4v16M5 9v4c0 1 1 2 2 2h10c1 0 2-1 2-2V9" stroke="#fff" strokeWidth="2" fill="none" /></svg></TS>
        <TS line="left-[3px] right-[6px]"><svg viewBox="0 0 24 24" className="w-[24px] h-[24px]"><rect width="24" height="24" rx="2" fill="#f0a028" /><path d="M5 6l11-2 3 14-11 2z" fill="#f8ecc8" stroke="#a06010" /><path d="M8 10l6-1M8 13l6-1M9 16l4-1" stroke="#a06010" /><path d="M14 14L21 3" stroke="#b03020" strokeWidth="2" /></svg></TS>
        <span className="ml-[63px] text-[12px] text-[#bbb] shrink-0">链接</span>
        <svg viewBox="0 0 12 7" className="ml-[12px] w-[12px] h-[7px] shrink-0"><path d="M1 6l5-5 5 5" stroke="#ddd" fill="none" strokeWidth="1.200" /></svg>
        <svg viewBox="0 0 16 14" className="ml-[33px] w-[16px] h-[14px] shrink-0"><rect x="4" y="5" width="11" height="7" fill="#e0e0e0" /><path d="M2 1v4M5 1v4M1 5h5v3H1z" stroke="#eee" fill="none" /></svg>
        <svg viewBox="0 0 14 14" className="ml-[9px] w-[14px] h-[14px] shrink-0"><path d="M1 13C1 7 6 2 13 1M4 13c0-4 4-8 9-9M7 13c0-2 3-5 6-6" stroke="#999" fill="none" /><circle cx="2" cy="12" r="1" fill="#ddd" /></svg>
        <svg viewBox="0 0 16 16" className="ml-[7px] w-[16px] h-[16px] shrink-0"><path d="M1 6h3l4-4v12l-4-4H1z" fill="none" stroke="#ddd" /><path d="M10 5c2 2 2 4 0 6M12 3c3 3 3 7 0 10" stroke="#ddd" fill="none" /></svg>
        <svg viewBox="0 0 22 16" className="ml-[8px] w-[22px] h-[16px] shrink-0"><rect x=".5" y=".5" width="21" height="15" fill="none" stroke="#ddd" /><path d="M3 4h16M3 7h16M6 11h10" stroke="#ddd" strokeDasharray="1.500 1" /></svg>
        <span className="ml-[11px] text-[14px] text-[#eee] shrink-0">英</span>
        <svg viewBox="0 0 16 20" className="ml-[13px] w-[16px] h-[19px] shrink-0"><path d="M2 3l12-3 2 15-13 5L0 6z" fill="#e8431a" /><path d="M12 6H6v3h5v4H4" fill="none" stroke="#fff" strokeWidth="2" /></svg>
        <div className="flex flex-col items-center ml-[16px] w-[60px] shrink-0 text-[12.500px] leading-[18px] text-[#ddd]">
            <span className="ml-[-28px]">17:25</span>
            <span className="whitespace-nowrap">2018/7/16</span>
        </div>
        <div className="relative ml-[19px] w-[24px] h-[28px] shrink-0 pt-[5px]">
            <svg viewBox="0 0 16 16" className="w-[17px] h-[17px]"><path d="M1 1h14v10H6l-3 3v-3H1z" fill="#eee" /><path d="M3 4h10M3 7h10" stroke="#333" /></svg>
            <span className="absolute left-[8px] top-[13px] flex items-center justify-center w-[15px] h-[15px] rounded-full bg-[#3c3c3c] text-white text-[11px] font-bold">1</span>
        </div>
    </div>
);

// Sogou IME bar floats over the window, so it is positioned, not laid out
const ImeBar = () => (
    <div className="absolute left-[969px] top-0 w-[207px] h-[28px]">
        <div className="absolute left-[5px] top-0 w-[44px] h-[4px] bg-[#4cb050] rounded-b-sm" />
        <div className="absolute left-[8px] top-[3px] w-[198px] h-[23px] flex items-center bg-white border border-[#b8cfe4] text-[#1f78c8]">
            <span className="ml-[25px] font-bold text-[13px]">英</span>
            <span className="ml-[9px] font-bold text-[13px] -mt-[2px]">•,</span>
            <svg viewBox="0 0 16 16" className="ml-[9px] w-[15px] h-[15px]"><circle cx="8" cy="8" r="7" fill="none" stroke="#1f78c8" strokeWidth="1.400" /><circle cx="5.500" cy="6" r="1" fill="#1f78c8" /><circle cx="10.500" cy="6" r="1" fill="#1f78c8" /><path d="M4.500 10q3.500 3 7 0" stroke="#1f78c8" fill="none" /></svg>
            <svg viewBox="0 0 14 16" className="ml-[9px] w-[13px] h-[16px]"><rect x="4" y="0" width="6" height="10" rx="3" fill="#1f78c8" /><path d="M1 7c0 6 12 6 12 0M7 12v3M3 15h8" stroke="#1f78c8" fill="none" strokeWidth="1.300" /></svg>
            <svg viewBox="0 0 16 12" className="ml-[6px] w-[16px] h-[12px]"><rect width="16" height="12" rx="1.500" fill="#1f78c8" /><path d="M2 3h12M2 6h12M4 9h8" stroke="#fff" strokeDasharray="1.500 1" /></svg>
            <svg viewBox="0 0 16 16" className="ml-[7px] w-[15px] h-[15px]"><circle cx="6" cy="4" r="3" fill="#b8c4ce" /><path d="M1 12c0-5 9-5 9 0z" fill="#b8c4ce" /><rect x="7" y="9" width="9" height="6" fill="#fff" stroke="#b8c4ce" /></svg>
            <svg viewBox="0 0 16 14" className="ml-[6px] w-[15px] h-[14px]"><path d="M5 0L0 3l2 3 2-1v9h8V5l2 1 2-3-5-3c-1 2-5 2-6 0z" fill="#1f78c8" /></svg>
            <svg viewBox="0 0 16 16" className="ml-[7px] w-[15px] h-[15px]"><path d="M15 4l-3 3-3-3 3-3c-4-1-6 2-5 5l-6 6c-1 2 1 4 3 3l6-6c3 1 6-1 5-5z" fill="#1f78c8" /></svg>
        </div>
        <svg viewBox="0 0 28 26" className="absolute left-0 top-[1px] w-[27px] h-[26px]"><path d="M3 5L22 0l6 18-20 8L0 12z" fill="#ee4f1c" /><path d="M20 7H8v6h11v5H6" fill="none" stroke="#fff" strokeWidth="3" /></svg>
    </div>
);

const App = () => (
    <div className="relative flex flex-col w-[1366px] h-[768px] overflow-hidden bg-[#f0f0f0] text-[12px] text-[#1a1a1a] font-['Liberation_Sans','Noto_Sans_CJK_SC',sans-serif]">
        <TitleBar />
        <MenuBar />
        <MainBar />
        <div className="flex flex-1 min-h-0">
            <LeftPanel />
            <div className="w-[4px] shrink-0 bg-[#eeeeee]" />
            <RightPanel />
        </div>
        <StatusBar />
        <Taskbar />
        <ImeBar />
    </div>
);

export default App;
